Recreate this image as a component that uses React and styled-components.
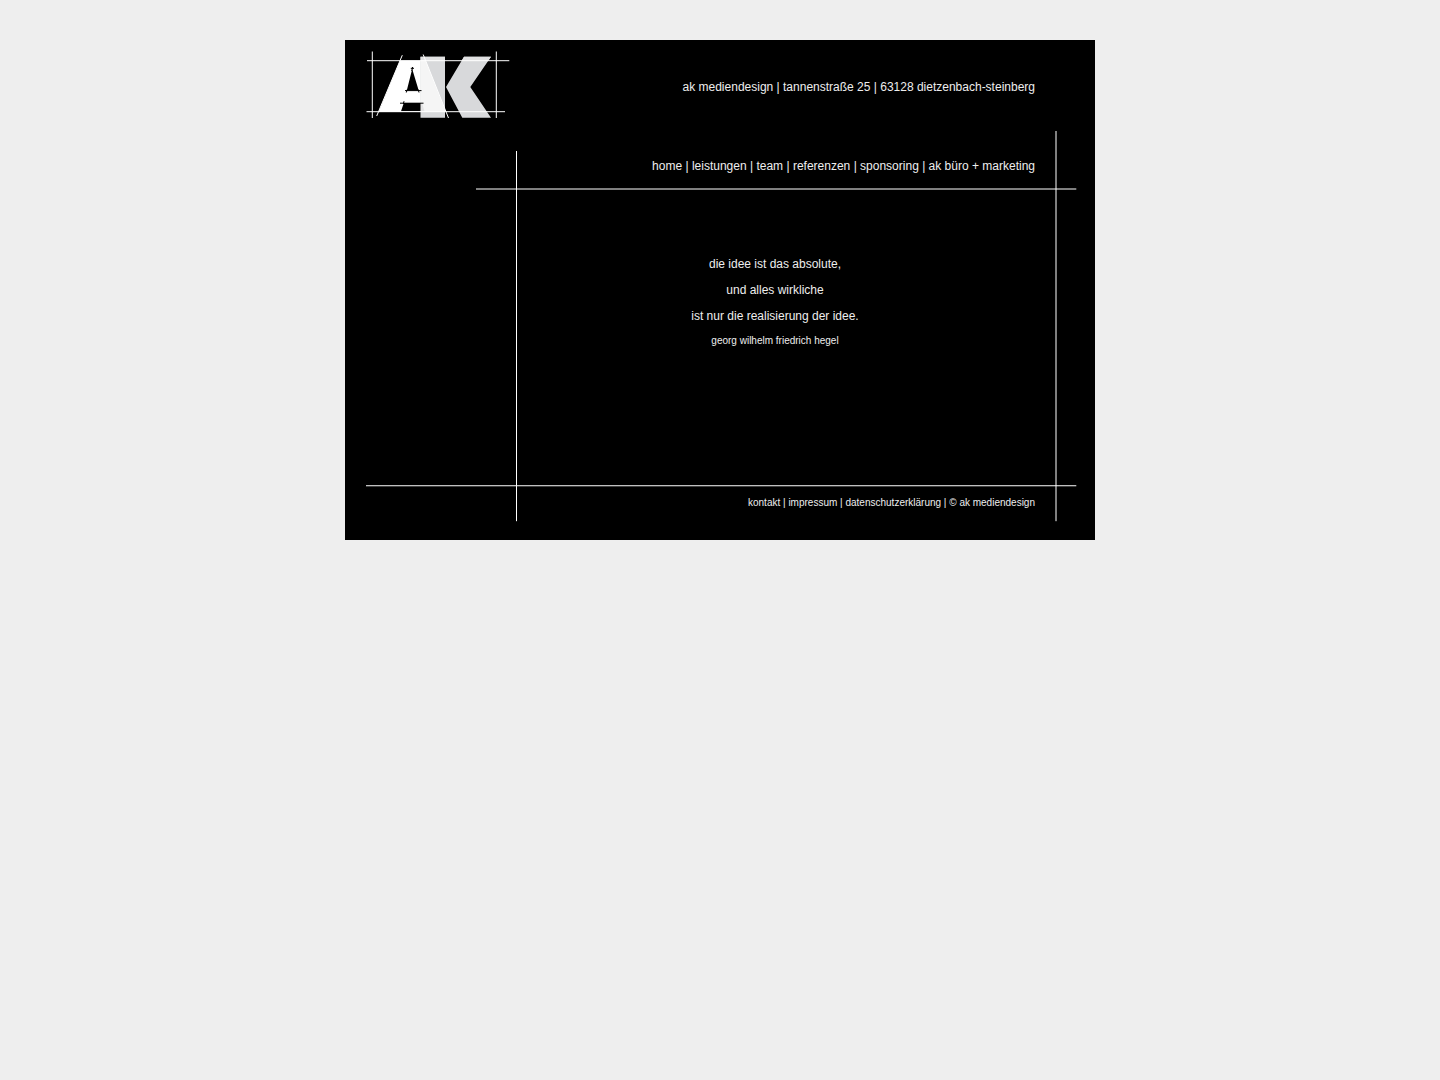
import styled, { createGlobalStyle } from 'styled-components';

const menu = ['home', 'leistungen', 'team', 'referenzen', 'sponsoring', 'ak büro + marketing'];
const footerLinks = ['kontakt', 'impressum', 'datenschutzerklärung'];

export default function App() {
  return (
    <>
      <GlobalStyle />
      <Page>
        <GuideLines />
        <Header>
          <Logo />
          <Address>ak mediendesign | tannenstraße 25 | 63128 dietzenbach-steinberg</Address>
        </Header>
        <Menu>
          {menu.map((item, i) => (
            <span key={item}>
              {i > 0 && ' | '}
              <Link href="#">{item}</Link>
            </span>
          ))}
        </Menu>
        <Quote>
          <QuoteLine>die idee ist das absolute,</QuoteLine>
          <QuoteLine>und alles wirkliche</QuoteLine>
          <QuoteLine>ist nur die realisierung der idee.</QuoteLine>
          <Author>georg wilhelm friedrich hegel</Author>
        </Quote>
        <Footer>
          {footerLinks.map((item) => (
            <span key={item}>
              <Link href="#">{item}</Link>
              {' | '}
            </span>
          ))}
          © ak mediendesign
        </Footer>
      </Page>
    </>
  );
}

function GuideLines() {
  return (
    <Lines viewBox="0 0 750 500" aria-hidden="true">
      <path d="M131 149H731.3M711 91V481.2M171.5 111V481.2M21 445.75H731.3" />
    </Lines>
  );
}

function Logo() {
  return (
    <LogoSvg viewBox="0 0 145 74" role="img" aria-label="ak mediendesign">
      <path fill="#fff" d="M35 10.5H60L81 62H13.5Z" />
      <path fill="#d8d9db" d="M55.5 6.8H80V67.7H55.5ZM99 6.8H126L105.3 37L126 67.7H97.3L81 37Z" />
      <path fill="#e1e1e2" d="M55.5 6.8H80V10.5H55.5ZM99 6.8H126L123.5 10.5H96.8Z" />
      {/* overlap of both letters */}
      <path fill="#f5f5f5" d="M55.5 10.5H60.5L80 60V62H55.5Z" />
      <path fill="#e4e4e5" d="M55.5 53H57L59.5 61.5H55.5Z" />
      <path fill="#000" d="M47.2 19L41.8 40.5H53.7ZM38.8 53H55.5V61.2H36Z" />
      <path stroke="#000" d="M45.8 18.3H49M47.6 17L46.7 21M40 40.6H56.5M42.2 39.5L41.3 42.5M53.2 39.5L54 42.5M35 53.2H58.5M39 51.2L38.3 54" />
      <path
        stroke="#fff"
        fill="none"
        d="M2 10.7H144.3M1.5 61.7H140M7.3 1.5V68M131.3 1.5V68M37.3 5.2L11.7 66M58.2 4.5L83.5 68"
      />
    </LogoSvg>
  );
}

const GlobalStyle = createGlobalStyle`
  body {
    margin: 0;
    background: #eee;
    color: #eee;
    font-family: "Liberation Sans", Arial, sans-serif;
    font-size: 12px;
    line-height: 16px;
  }
`;

const Page = styled.div`
  position: relative;
  box-sizing: border-box;
  max-width: 750px;
  margin: 40px auto;
  padding: 10px 60px 29px 20px;
  background: #000;
`;

const Lines = styled.svg`
  position: absolute;
  inset: 0;
  width: 100%;
  height: 100%;
  pointer-events: none;

  path {
    fill: none;
    stroke: #fff;
  }
`;

const Header = styled.header`
  display: flex;
  align-items: center;
  justify-content: space-between;
`;

const LogoSvg = styled.svg`
  width: 145px;
  height: 74px;
  flex-shrink: 0;
`;

const Address = styled.div`
  text-align: right;
`;

const Menu = styled.nav`
  margin-top: 34px;
  text-align: right;
`;

const Link = styled.a`
  color: inherit;
  text-decoration: none;
`;

const Quote = styled.main`
  margin: 77px 0 142px 150px;
  text-align: center;
`;

const QuoteLine = styled.p`
  margin: 0;
  line-height: 26px;
`;

const Author = styled.p`
  margin: 0;
  font-size: 10px;
  line-height: 24px;
`;

const Footer = styled.footer`
  font-size: 10px;
  text-align: right;
`;
